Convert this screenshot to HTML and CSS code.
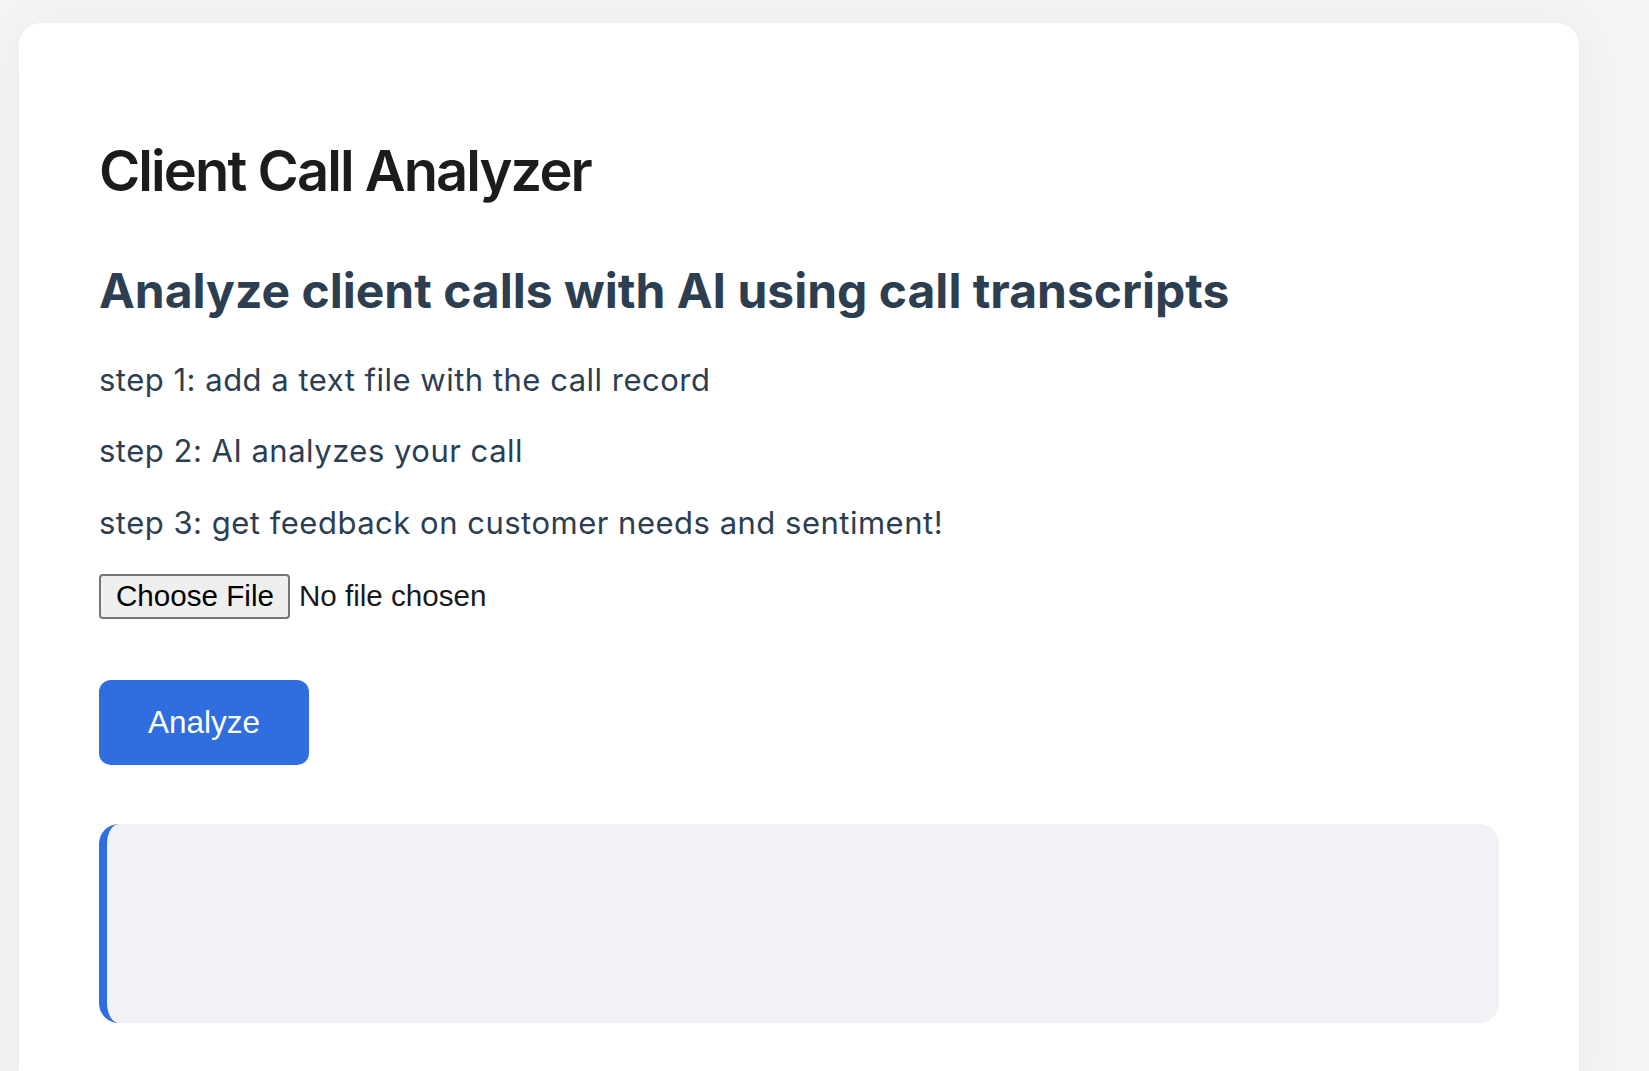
FILE: index.html
```html
<!DOCTYPE html>
<html lang="en">
<head>
<meta charset="utf-8">
<title>Client Call Analyzer</title>
<link rel="stylesheet" href="styles.css">
</head>
<body>
  <main class="card">
    <h1 class="title">Client Call Analyzer</h1>
    <h2 class="subtitle">Analyze client calls with AI using call transcripts</h2>
    <p class="step">step 1: add a text file with the call record</p>
    <p class="step">step 2: AI analyzes your call</p>
    <p class="step">step 3: get feedback on customer needs and sentiment!</p>
    <div class="upload">
      <input class="file-input" type="file" accept=".txt">
    </div>
    <button class="analyze-btn" type="button">Analyze</button>
    <div class="result"></div>
  </main>
</body>
</html>
```

FILE: styles.css
```css
html, body {
  margin: 0;
  padding: 0;
}

body {
  background: #f3f4f6;
  font-family: "Inter", "Noto Sans", sans-serif;
  padding: 23px 0 0 19px;
}

.card {
  width: 1560px;
  box-sizing: border-box;
  background: #ffffff;
  border-radius: 22px;
  padding: 80px;
  box-shadow: 0 4px 50px rgba(0, 0, 0, 0.05);
}

.title {
  margin: 34px 0 0;
  font-size: 56px;
  font-weight: 600;
  letter-spacing: -1.9px;
  line-height: normal;
  color: #1c1c1c;
}

.subtitle {
  margin: 56px 0 0;
  font-size: 48px;
  font-weight: 700;
  line-height: normal;
  color: #2c3e50;
}

.step {
  margin: 34.5px 0 0;
  font-size: 31px;
  letter-spacing: 0.5px;
  line-height: normal;
  color: #2c3e50;
}

.subtitle + .step {
  margin-top: 40.5px;
}

.upload {
  margin-top: 33px;
  height: 45px;
}

.file-input {
  font-family: "Liberation Sans", Arial, sans-serif;
  font-size: 29.6px;
  color: #1a1a1a;
  line-height: normal;
}

.file-input::file-selector-button {
  font: inherit;
  color: #000;
  background: #efefef;
  border: 2px solid #767676;
  border-radius: 4px;
  padding: 3px 14px 4px 15px;
  margin-right: 9px;
}

.analyze-btn {
  display: block;
  margin-top: 61px;
  font-family: "Liberation Sans", Arial, sans-serif;
  font-size: 31.5px;
  line-height: normal;
  color: #ffffff;
  background: #306ee0;
  border: none;
  border-radius: 12px;
  padding: 24px 49px;
  cursor: pointer;
}

.result {
  margin-top: 59px;
  min-height: 199px;
  box-sizing: border-box;
  background: #f0f2f6;
  border-left: 8px solid #306ee0;
  border-radius: 20px;
}
```
